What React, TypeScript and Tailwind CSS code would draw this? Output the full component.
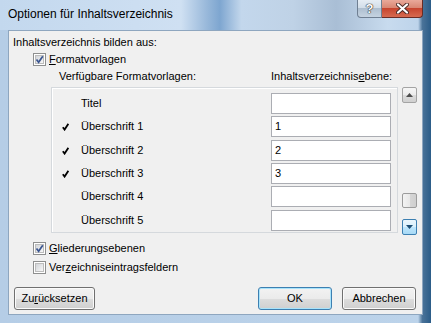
import React from 'react';

const ROWS = [
  { name: 'Titel', checked: false, level: '', mt: 'mt-0' },
  { name: 'Überschrift 1', checked: true, level: '1', mt: 'mt-[2px]' },
  { name: 'Überschrift 2', checked: true, level: '2', mt: 'mt-[3px]' },
  { name: 'Überschrift 3', checked: true, level: '3', mt: 'mt-[2px]' },
  { name: 'Überschrift 4', checked: false, level: '', mt: 'mt-[2px]' },
  { name: 'Überschrift 5', checked: false, level: '', mt: 'mt-[3px]' },
];

const CheckBox = ({ checked }: { checked: boolean }) => (
  <span className="relative w-[13px] h-[13px] border border-[#8e8f8f] bg-white flex items-center justify-center shrink-0">
    <span className="w-[9px] h-[9px] border border-[#bcbcbc] bg-gradient-to-br from-[#d2d5d9] to-[#f7f7f7]" />
    {checked && (
      <svg className="absolute inset-0" width="11" height="11" viewBox="0 0 11 11">
        <path d="M2.5 5.5 L4.6 8.2 L8.8 2.2" fill="none" stroke="#3a5590" strokeWidth="1.7" />
      </svg>
    )}
  </span>
);

const Button = ({ children, focus }: { children: React.ReactNode; focus?: boolean }) => (
  <button
    className={`h-[23px] rounded-[3px] border text-[11px] ${
      focus
        ? 'border-[#3c7fb1] shadow-[inset_0_0_0_1px_#a8e3fb]'
        : 'border-[#707070] shadow-[inset_0_0_0_1px_#fbfbfb]'
    } bg-[linear-gradient(180deg,#f2f2f2_0%,#ebebeb_50%,#dddddd_51%,#cfcfcf_100%)]`}
  >
    {children}
  </button>
);

const ScrollBtn = ({ down }: { down?: boolean }) => (
  <div
    className={`w-[15px] h-[16px] rounded-[2px] border flex items-center justify-center ${
      down
        ? 'border-[#3c7fb1] bg-[linear-gradient(180deg,#eaf6fd_0%,#d9f0fc_50%,#bee6fd_51%,#a7d9f5_100%)]'
        : 'border-[#a4a4a4] bg-[linear-gradient(180deg,#f6f6f6_0%,#ececec_50%,#dcdcdc_51%,#d0d0d0_100%)]'
    }`}
  >
    <svg width="7" height="4" viewBox="0 0 7 4">
      {down ? (
        <path d="M0 0 H7 L3.5 4 Z" fill="#1c4e74" />
      ) : (
        <path d="M0 4 H7 L3.5 0 Z" fill="#4d4d4d" />
      )}
    </svg>
  </div>
);

export default function App() {
  return (
    <div className="w-[431px] h-[323px] flex flex-col overflow-hidden text-black font-['Liberation_Sans',Arial,sans-serif] text-[11px] leading-[13px] bg-[linear-gradient(90deg,#b5cde6_0%,#bcd3ea_97%,#4a7399_98%,#2b5c88_100%)]">
      {/* Title bar */}
      <div className="h-[30px] flex items-start bg-[linear-gradient(90deg,#c3d8ee_0%,#cfe0f2_42%,#98b8da_48%,#7ea6d0_51%,#c3d7ec_56%,#bfd2e6_68%,#a9bed5_78%,#c8dbee_90%,#bdd3ea_97%,#4a7399_98%,#2b5c88_100%)]">
        <div className="flex-1 pl-[8px] pt-[7px] text-[12px] leading-[14px]">
          Optionen für Inhaltsverzeichnis
        </div>
        <div className="flex mr-[8px]">
          <div className="w-[25px] h-[18px] rounded-bl-[4px] border border-t-0 border-[#6f7f92] bg-[linear-gradient(180deg,#e6edf4_0%,#d3dee9_45%,#aebfd0_50%,#c5d3e1_100%)] flex items-center justify-center">
            <span className="text-white font-bold text-[13px] leading-[13px] [text-shadow:0_0_1px_#2a2a2a,0_0_1px_#2a2a2a,0_0_1px_#2a2a2a]">?</span>
          </div>
          <div className="w-[41px] h-[18px] rounded-br-[4px] border border-t-0 border-l-0 border-[#6a2c25] bg-[linear-gradient(180deg,#e9a99a_0%,#d98774_45%,#c7452f_50%,#d66a50_100%)] flex items-center justify-center">
            <svg width="13" height="11" viewBox="0 0 13 11">
              <path d="M2 1.5 L11 9.5 M11 1.5 L2 9.5" stroke="#4a2a26" strokeWidth="4" strokeLinecap="round" />
              <path d="M2 1.5 L11 9.5 M11 1.5 L2 9.5" stroke="#ffffff" strokeWidth="2.2" strokeLinecap="round" />
            </svg>
          </div>
        </div>
      </div>

      {/* Client area */}
      <div className="flex-1 mx-[8px] mb-[8px] bg-[#f0f0f0] border border-[#8ea6bf] flex flex-col">
        <div className="mt-[5px] ml-[4px]">Inhaltsverzeichnis bilden aus:</div>

        <div className="mt-[4px] ml-[24px] flex items-center gap-[3px] h-[13px]">
          <CheckBox checked />
          <span>
            <u>F</u>ormatvorlagen
          </span>
        </div>

        <div className="mt-[4px] flex">
          <span className="ml-[50px] w-[212px]">Verfügbare Formatvorlagen:</span>
          <span>
            Inhaltsverzeichnis<u>e</u>bene:
          </span>
        </div>

        <div className="mt-[4px] ml-[42px] flex items-start gap-[4px]">
          <div className="w-[347px] h-[146px] border border-[#d5d9dd] shadow-[inset_1px_1px_0_#ffffff] pt-[5px] flex flex-col">
            {ROWS.map((r) => (
              <div key={r.name} className={`flex items-center h-[21px] ${r.mt}`}>
                <span className="w-[29px] pl-[10px] flex items-center">
                  {r.checked && (
                    <svg width="7" height="8" viewBox="0 0 7 8">
                      <path d="M0.8 4.2 L2.6 6.6 L6.4 0.8" fill="none" stroke="#000" strokeWidth="1.8" />
                    </svg>
                  )}
                </span>
                <span className="w-[190px]">{r.name}</span>
                <div className="w-[120px] h-[21px] border border-[#abadb3] bg-white pl-[3px] flex items-center">
                  {r.level}
                </div>
              </div>
            ))}
          </div>

          <div className="w-[15px] h-[148px] flex flex-col justify-between">
            <ScrollBtn />
            <div className="flex flex-col">
              <div className="w-[15px] h-[15px] rounded-[2px] border border-[#9c9c9c] bg-[linear-gradient(90deg,#f3f3f3_0%,#e8e8e8_50%,#d6d6d6_51%,#cfcfcf_100%)] mb-[11px]" />
              <ScrollBtn down />
            </div>
          </div>
        </div>

        <div className="mt-[7px] ml-[24px] flex items-center gap-[3px] h-[13px]">
          <CheckBox checked />
          <span>
            <u>G</u>liederungsebenen
          </span>
        </div>
        <div className="mt-[6px] ml-[24px] flex items-center gap-[3px] h-[13px]">
          <CheckBox checked={false} />
          <span>
            Ver<u>z</u>eichniseintragsfeldern
          </span>
        </div>

        <div className="mt-[13px] flex items-center px-[5px]">
          <div className="w-[81px] flex">
            <div className="w-full flex flex-col">
              <Button>
                Zu<u>r</u>ücksetzen
              </Button>
            </div>
          </div>
          <div className="flex-1" />
          <div className="flex gap-[10px] mr-[1px]">
            <div className="w-[74px] flex flex-col">
              <Button focus>OK</Button>
            </div>
            <div className="w-[74px] flex flex-col">
              <Button>Abbrechen</Button>
            </div>
          </div>
        </div>
      </div>
    </div>
  );
}
